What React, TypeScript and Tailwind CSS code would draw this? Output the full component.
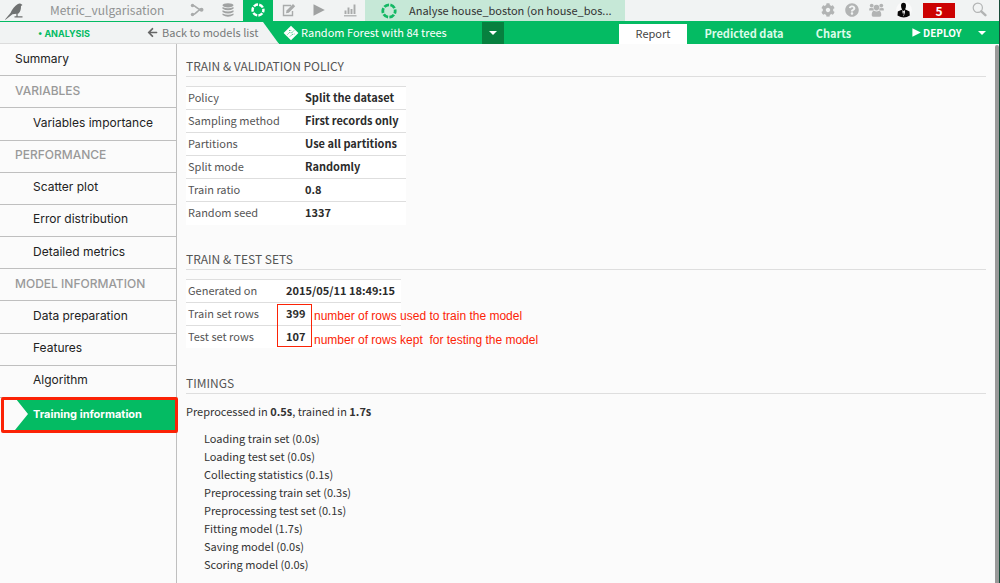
import type { ReactNode } from "react";
import { FaArrowLeft, FaCog, FaQuestionCircle } from "react-icons/fa";

function BirdIcon() {
  return (
    <svg viewBox="0 0 20 18" className="h-[18px] w-5" aria-hidden="true">
      <path d="M1 17.500 6.500 11C8 7 11 4 13.500 2.200 15 1 17 1.200 17.500 2.300L18.500 3 17 4C17 7 16.500 10 14.500 11.500L8.500 12.200 1.500 17.800Z" fill="#6f7171" />
      <path d="M13 11V14.500M10.500 14.800H18.500" stroke="#6f7171" strokeWidth="1.300" fill="none" />
    </svg>
  );
}

function FlowIcon() {
  return (
    <svg viewBox="0 0 14 14" className="size-3.5" aria-hidden="true">
      <path d="M3 2.500C6 2.500 7 6.500 11 6.500 7 7 6 11.500 3 11.500" stroke="#a9abab" strokeWidth="1.600" fill="none" />
      <circle cx="2.500" cy="2.500" r="1.700" fill="#a9abab" />
      <circle cx="2.500" cy="11.500" r="1.700" fill="#a9abab" />
      <circle cx="11.500" cy="6.800" r="2" fill="#a9abab" />
    </svg>
  );
}

function DatabaseIcon() {
  return (
    <svg viewBox="0 0 12 14" className="h-3.5 w-3" fill="#a0a2a2" aria-hidden="true">
      <ellipse cx="6" cy="2.300" rx="5.500" ry="2.100" />
      <path d="M.5 4Q6 6.600 11.500 4V5.700Q6 8.800.5 5.700ZM.5 7.200Q6 9.800 11.500 7.200V8.900Q6 12 .5 8.900ZM.5 10.400Q6 13 11.500 10.400V12Q6 15.600.5 12Z" />
    </svg>
  );
}

function RingIcon({ color, className }: { color: string; className: string }) {
  return (
    <svg viewBox="0 0 16 16" className={className} aria-hidden="true">
      <circle cx="8" cy="8" r="6.200" fill="none" stroke={color} strokeWidth="2.800" strokeDasharray="5.100 1.392" strokeDashoffset="2.550" />
    </svg>
  );
}

function EditIcon() {
  return (
    <svg viewBox="0 0 14 14" className="size-3.5" aria-hidden="true">
      <path d="M9 2.500H1.500V12.500H10.500V8" fill="none" stroke="#a9abab" strokeWidth="1.400" />
      <path d="M4.500 7.500 11 1 13.200 3.200 6.800 9.700 4 10.300Z" fill="#a9abab" />
    </svg>
  );
}

function PlayIcon({ className }: { className: string }) {
  return (
    <svg viewBox="0 0 12 12" className={className} fill="currentColor" aria-hidden="true">
      <path d="M.5.3 11.800 6 .5 11.700Z" />
    </svg>
  );
}

function ChartIcon() {
  return (
    <svg viewBox="0 0 14 14" className="size-3.5" aria-hidden="true">
      <path d="M1 12.800H13.500" stroke="#a9abab" strokeWidth="1.200" />
      <path d="M2.500 11V7.500M5.500 11V4.500M8.500 11V6M11.500 11V1.500" stroke="#a9abab" strokeWidth="1.900" />
    </svg>
  );
}

function GroupIcon() {
  return (
    <svg viewBox="0 0 15 14" className="h-3.5 w-[15px]" fill="#b2b4b4" aria-hidden="true">
      <circle cx="2.700" cy="2.600" r="1.900" />
      <circle cx="12.300" cy="2.600" r="1.900" />
      <circle cx="7.500" cy="4.600" r="2.800" />
      <path d="M.2 7.500V6Q.3 4.800 1.500 4.900L4.500 5.200 4.800 7.500ZM14.800 7.500V6Q14.700 4.800 13.500 4.900L10.500 5.200 10.200 7.500ZM2.700 12.300Q2.700 8 5.100 7.800 7.500 9 9.900 7.800 12.300 8 12.300 12.300 12 13.800 10.500 13.800H4.500Q3 13.800 2.700 12.300Z" />
    </svg>
  );
}

function AvatarIcon() {
  return (
    <svg viewBox="0 0 16 16" className="size-4" aria-hidden="true">
      <circle cx="8" cy="8" r="7.900" fill="#fafafa" />
      <path d="M5 3.800Q5 .8 7.500.8T10 3.800Q9.900 6.500 9 7.300L13.500 9.500 13.800 13.500Q8 17.500 1.500 13.500L1.800 9.500 6.200 7.400Q5 6 5 3.800Z" fill="#080808" />
      <path d="M6.600 8 7.500 9.300 8.600 8 9 10 7.700 14.500 6.400 10Z" fill="#fff" />
      <path d="M7.500 9 8 12.500 7.600 13.500 7.200 12.500Z" fill="#111" />
    </svg>
  );
}

function SearchIcon() {
  return (
    <svg viewBox="0 0 15 15" className="size-[15px]" aria-hidden="true">
      <circle cx="5.800" cy="5.800" r="4.600" fill="none" stroke="#b2b4b4" strokeWidth="1.200" />
      <path d="M9.300 9.300 13.400 13.200" stroke="#b2b4b4" strokeWidth="2.400" strokeLinecap="round" />
    </svg>
  );
}

function ForestIcon() {
  return (
    <svg viewBox="0 0 16 16" className="size-4" aria-hidden="true">
      <path d="M8 .8 15.400 8 8 15.200.6 8Z" fill="#fff" />
      <path d="M4.500 9.500 6.500 7.500 8.500 8 11 5.500M7 11.500 9 9.500 11.500 9M6 5.500H8.500" stroke="#3fc97e" strokeWidth="1" strokeDasharray="1.500 .8" fill="none" />
    </svg>
  );
}

function Caret() {
  return (
    <svg viewBox="0 0 8 4" className="h-1 w-2" fill="currentColor" aria-hidden="true">
      <path d="M0 0H8L4 4Z" />
    </svg>
  );
}

function IconButton({ label, className, children }: { label: string; className: string; children: ReactNode }) {
  return (
    <button type="button" aria-label={label} className={`flex h-full shrink-0 items-center justify-center pb-[2px] ${className}`}>
      {children}
    </button>
  );
}

function TopBar() {
  return (
    <header className="flex h-[21px] items-center bg-[#f1f3f3] pr-[11px]">
      <a href="#home" aria-label="Home" className="w-[50px] shrink-0 pl-1">
        <BirdIcon />
      </a>
      <a href="#project" className="w-[131px] shrink-0 pb-[2px] text-[12px] leading-5 text-[#909292]">Metric_vulgarisation</a>
      <IconButton label="Flow" className="w-[31px]"><FlowIcon /></IconButton>
      <IconButton label="Datasets" className="w-[31px]"><DatabaseIcon /></IconButton>
      <IconButton label="Analyses" className="w-[30px] bg-[#04bb63]">
        <RingIcon color="#fff" className="size-3.5" />
      </IconButton>
      <IconButton label="Notebooks" className="w-[31px]"><EditIcon /></IconButton>
      <IconButton label="Jobs" className="w-[30px] text-[#a0a2a2]"><PlayIcon className="size-3" /></IconButton>
      <IconButton label="Insights" className="w-[31px]"><ChartIcon /></IconButton>
      <a href="#analysis" className="flex h-full w-[260px] shrink-0 items-center gap-3 bg-[#c6e8d7] pl-4 text-[11px] text-[#333]">
        <RingIcon color="#13b864" className="size-4" />
        <span className="pb-px whitespace-nowrap">Analyse house_boston (on house_bos...</span>
      </a>
      <div className="ml-auto flex h-full items-center text-[#b2b4b4]">
        <IconButton label="Settings" className="w-6"><FaCog size={14} /></IconButton>
        <IconButton label="Help" className="w-6"><FaQuestionCircle size={14} /></IconButton>
        <IconButton label="Team" className="w-6"><GroupIcon /></IconButton>
        <IconButton label="Profile" className="mr-[3px] w-8"><AvatarIcon /></IconButton>
        <button type="button" aria-label="5 notifications" className="mr-4 h-[15px] w-8 bg-[#cc0202] text-[12px] leading-[15px] font-bold text-white">5</button>
        <IconButton label="Search" className="w-[17px]"><SearchIcon /></IconButton>
      </div>
    </header>
  );
}

function ModelBar() {
  return (
    <nav className="flex h-[23px] border-t border-[#04bb63] bg-[#04bb63] text-[11px] text-white">
      <div className="flex w-[279px] shrink-0 items-center border-b border-[#dcdcdc] bg-[#f1f3f3] [clip-path:polygon(0_0,calc(100%-16px)_0,100%_100%,0_100%)]">
        <span className="w-[147px] pt-[2px] pl-[38px] font-[Inter,sans-serif] text-[9px] font-bold text-[#04bb63]">• ANALYSIS</span>
        <a href="#models" className="flex items-center gap-1 pb-px text-[#777979]">
          <FaArrowLeft size={11} color="#666" />
          Back to models list
        </a>
      </div>
      <div className="flex w-[203px] shrink-0 items-center gap-[2px] pb-px pl-1 whitespace-nowrap">
        <ForestIcon />
        Random Forest with 84 trees
      </div>
      <button type="button" aria-label="Choose a model" className="flex w-[22px] shrink-0 items-center justify-center bg-[#07803f]">
        <Caret />
      </button>
      <div className="ml-auto flex">
        <a href="#report" className="mt-[2px] w-[68px] bg-white text-center leading-[19px] text-[#444]">Report</a>
        <a href="#predicted" className="mt-[2px] w-[114px] text-center leading-[19px] font-bold text-[#dbfbe9]">Predicted data</a>
        <a href="#charts" className="mt-[2px] w-[65px] text-center leading-[19px] font-bold text-[#dbfbe9]">Charts</a>
      </div>
      <button type="button" className="ml-[46px] flex w-[87px] shrink-0 items-center gap-[2px] pb-px text-[10px] font-bold">
        <PlayIcon className="size-[9px]" />
        DEPLOY
        <span className="ml-[14px]"><Caret /></span>
      </button>
    </nav>
  );
}

type Entry = { label: string; kind: "top" | "heading" | "item" | "active" };

const entries: Entry[] = [
  { label: "Summary", kind: "top" },
  { label: "VARIABLES", kind: "heading" },
  { label: "Variables importance", kind: "item" },
  { label: "PERFORMANCE", kind: "heading" },
  { label: "Scatter plot", kind: "item" },
  { label: "Error distribution", kind: "item" },
  { label: "Detailed metrics", kind: "item" },
  { label: "MODEL INFORMATION", kind: "heading" },
  { label: "Data preparation", kind: "item" },
  { label: "Features", kind: "item" },
  { label: "Algorithm", kind: "item" },
  { label: "Training information", kind: "active" },
];

const entryStyles: Record<Entry["kind"], string> = {
  top: "border-b border-[#bfbfbf] pl-[15px] text-[#222]",
  heading: "border-b border-[#bfbfbf] pl-[15px] font-medium text-[#999]",
  item: "border-b border-[#bfbfbf] pl-[33px] text-[#222]",
  active: "relative text-[11px] text-white font-bold",
};

function Sidebar() {
  return (
    <aside className="w-[177px] shrink-0 border-r border-[#bfbfbf] font-[Inter,sans-serif] text-[12px]">
      <ul className="grid h-[386px] auto-rows-fr">
        {entries.map((entry) => (
          <li key={entry.label} className={entryStyles[entry.kind]}>
            {entry.kind === "heading" && <span className="flex h-full items-center pb-[2px]">{entry.label}</span>}
            {(entry.kind === "item" || entry.kind === "top") && (
              <a href="#section" className="flex h-full items-center pb-[2px]">{entry.label}</a>
            )}
            {entry.kind === "active" && (
              <>
                <a href="#training" aria-current="page" className="ml-[15px] flex h-full items-center bg-[#04bb63] pl-[18px] [clip-path:polygon(0_0,100%_0,100%_100%,0_100%,13px_50%)]">
                  {entry.label}
                </a>
                <span className="pointer-events-none absolute -top-px -right-[2px] -bottom-[3px] left-px rounded-[2px] border-3 border-[#fb2306]" />
              </>
            )}
          </li>
        ))}
      </ul>
    </aside>
  );
}

function SectionTitle({ children }: { children: ReactNode }) {
  return <h2 className="h-[21px] border-b border-[#dedede] text-[12px] leading-5 text-[#555]">{children}</h2>;
}

function FactTable({ rows, label, className, labelWidth }: { rows: [string, string][]; label: string; className: string; labelWidth: string }) {
  return (
    <table aria-label={label} className={`table-fixed border-collapse bg-white text-left text-[11px] leading-5 ${className}`}>
      <tbody>
        {rows.map(([name, value]) => (
          <tr key={name} className="h-[23px] border-t border-[#dedede] align-top">
            <th scope="row" className={`p-0 pl-[2px] font-normal text-[#555] ${labelWidth}`}>{name}</th>
            <td className="p-0 font-bold whitespace-nowrap text-[#2b2b2b]">{value}</td>
          </tr>
        ))}
      </tbody>
    </table>
  );
}

const policy: [string, string][] = [
  ["Policy", "Split the dataset"],
  ["Sampling method", "First records only"],
  ["Partitions", "Use all partitions"],
  ["Split mode", "Randomly"],
  ["Train ratio", "0.8"],
  ["Random seed", "1337"],
];

const sets: [string, string][] = [
  ["Generated on", "2015/05/11 18:49:15"],
  ["Train set rows", "399"],
  ["Test set rows", "107"],
];

const timings = [
  "Loading train set (0.0s)",
  "Loading test set (0.0s)",
  "Collecting statistics (0.1s)",
  "Preprocessing train set (0.3s)",
  "Preprocessing test set (0.1s)",
  "Fitting model (1.7s)",
  "Saving model (0.0s)",
  "Scoring model (0.0s)",
];

export default function App() {
  return (
    <div className="flex min-h-screen flex-col border-r border-[#174b38] bg-[#fbfbfb] font-['Noto_Sans_CJK_SC',sans-serif]">
      <TopBar />
      <ModelBar />
      <div className="flex flex-1">
        <Sidebar />
        <main className="min-w-0 flex-1 pt-3 pr-[9px] pl-[9px]">
          <section>
            <SectionTitle>TRAIN &amp; VALIDATION POLICY</SectionTitle>
            <FactTable rows={policy} label="Train and validation policy" className="mt-[9px] w-[220px]" labelWidth="w-[119px]" />
          </section>
          <section className="mt-6">
            <SectionTitle>TRAIN &amp; TEST SETS</SectionTitle>
            <div className="relative mt-[9px]">
              <FactTable rows={sets} label="Train and test sets" className="w-[215px]" labelWidth="w-[100px]" />
              <div className="pointer-events-none absolute top-[25px] left-[91px] h-[43px] w-[35px] border border-[#fb2306]" />
              <div className="absolute top-[25px] left-[128px] font-['Liberation_Sans',sans-serif] text-[12px] leading-6 whitespace-pre text-[#fb2306]">
                <p>number of rows used to train the model</p>
                <p>number of rows kept  for testing the model</p>
              </div>
            </div>
          </section>
          <section className="mt-[25px]">
            <SectionTitle>TIMINGS</SectionTitle>
            <p className="mt-2 text-[11px] leading-[18px] text-[#333]">
              Preprocessed in <b>0.5s</b>, trained in <b>1.7s</b>
            </p>
            <ul className="mt-[9px] pl-[18px] text-[11px] leading-[18px] text-[#333]">
              {timings.map((line) => (
                <li key={line}>{line}</li>
              ))}
            </ul>
          </section>
        </main>
        <div className="mt-px w-1 shrink-0 rounded-t-[2px] bg-[#999]" />
      </div>
    </div>
  );
}
